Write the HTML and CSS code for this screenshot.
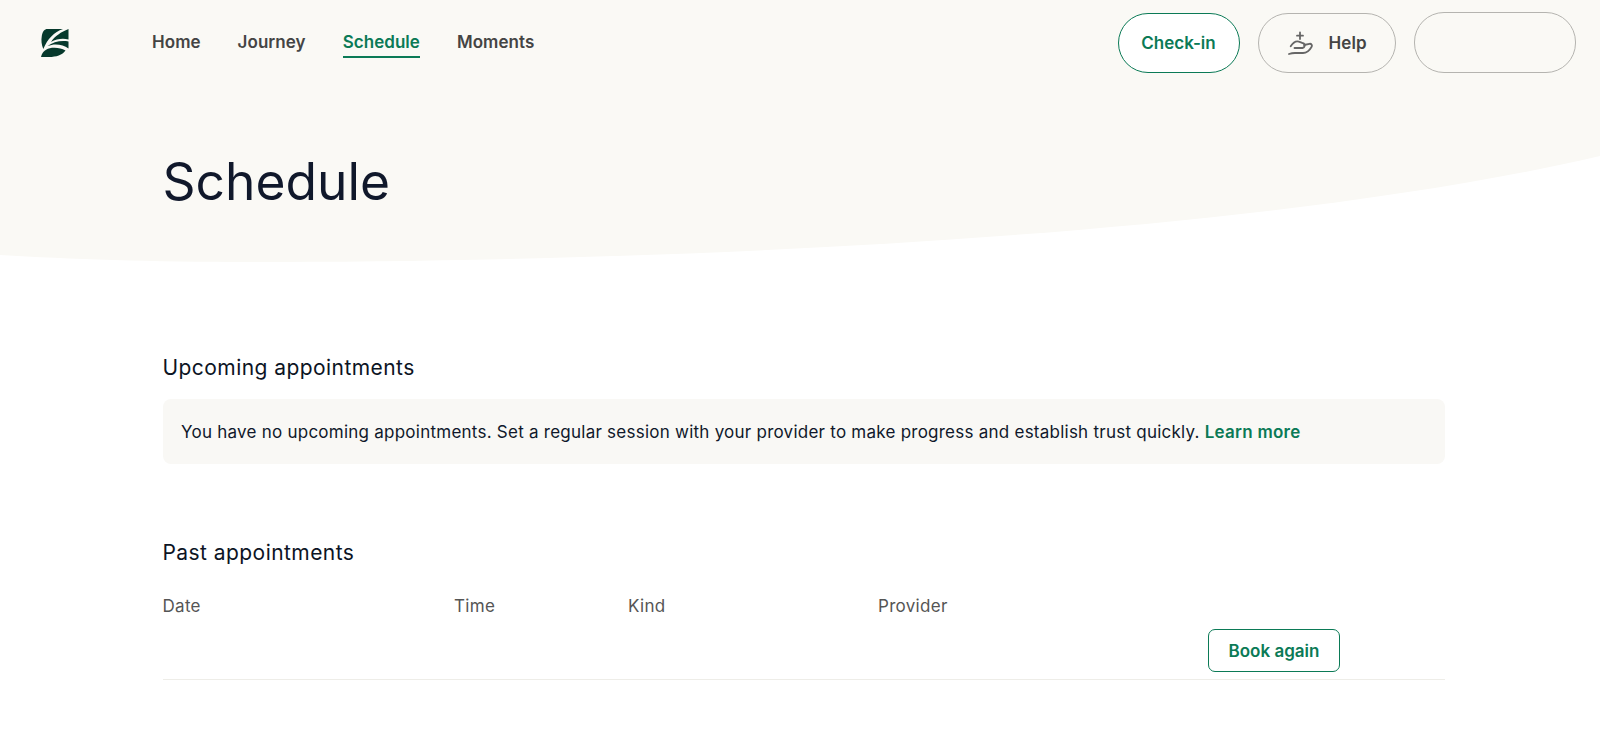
FILE: index.html
```html
<!DOCTYPE html>
<html lang="en">
<head>
<meta charset="utf-8">
<title>Schedule</title>
<link rel="stylesheet" href="styles.css">
</head>
<body>
<svg class="hero-bg" viewBox="0 0 1600 270" preserveAspectRatio="none" aria-hidden="true">
  <path d="M0 0H1600V156C1240 240 640 262 250 262C150 262 70 259 0 255Z"/>
</svg>
<header class="topbar">
  <a class="logo" href="#" aria-label="Home">
    <svg viewBox="0 0 28 28" width="28" height="28" fill="#06392c">
      <path d="M6.500 0H22C13 3 6.500 10 2.300 20C0.500 16 0 11 0.800 7C1.500 2.500 3.500 0 6.500 0Z"/>
      <path d="M27.500 0V10.500C21.500 9 15.500 10 10 13C14 7 20 3 27.500 0Z"/>
      <path d="M27.500 12.500V19.500C22 15.500 14 14 6.500 17C12 13 20 11 27.500 12.500Z"/>
      <path d="M0 28C1 23 5 19.500 11 18.800C16 18.300 20.500 19.300 24.500 21.500C21.500 26 15 28 8 28Z"/>
    </svg>
  </a>
  <nav class="nav">
    <a class="nav-link" href="#">Home</a>
    <a class="nav-link" href="#">Journey</a>
    <a class="nav-link active" href="#">Schedule</a>
    <a class="nav-link" href="#">Moments</a>
  </nav>
  <div class="actions">
    <a class="pill pill-green" href="#">Check-in</a>
    <a class="pill pill-help" href="#">
      <svg viewBox="0 0 25 25" width="25" height="25" fill="none" stroke="#666" stroke-width="1.800" stroke-linecap="round" stroke-linejoin="round">
        <path d="M12 1.500v6.500M9 4.700h6"/>
        <path d="M2.700 15.300C4.500 12.500 7 10.300 9.300 10.300C11.500 10.300 13.500 12 16 12.500C17.500 13 17 16.500 14.500 17H6.500"/>
        <path d="M16 14L21.500 12.800C23.500 12.500 24.500 14.500 23.500 16C21.500 19.500 18.500 22 15 22H7C5 22 3 22.300 1 23"/>
      </svg>
      <span>Help</span>
    </a>
    <a class="pill pill-empty" href="#" aria-label="Account"></a>
  </div>
</header>
<main class="page">
  <h1 class="title">Schedule</h1>
  <section class="upcoming">
    <h2 class="section-title">Upcoming appointments</h2>
    <p class="notice">You have no upcoming appointments. Set a regular session with your provider to make progress and establish trust quickly. <a class="learn" href="#">Learn more</a></p>
  </section>
  <section class="past">
    <h2 class="section-title">Past appointments</h2>
    <div class="table-head">
      <span>Date</span><span>Time</span><span>Kind</span><span>Provider</span>
    </div>
    <div class="table-row">
      <a class="book" href="#">Book again</a>
    </div>
  </section>
</main>
</body>
</html>
```
FILE: styles.css
```css
* { box-sizing: border-box; }
html, body { margin: 0; height: 100%; }
body {
  position: relative;
  background: #fff;
  color: #10182b;
  font-family: "Inter", "Liberation Sans", sans-serif;
  overflow: hidden;
}
a { text-decoration: none; color: inherit; }
.hero-bg {
  position: absolute;
  top: 0;
  left: 0;
  width: 1600px;
  height: 270px;
  z-index: -1;
  fill: #faf9f5;
}
.topbar {
  display: flex;
  align-items: flex-start;
  padding: 12px 24.500px 0 41px;
  height: 72px;
}
.logo { display: block; width: 28px; height: 28px; margin-top: 17px; }
.nav { display: flex; gap: 37px; margin-left: 83px; margin-top: 18px; }
.nav-link {
  font-size: 17px;
  font-weight: 600;
  line-height: 24px;
  letter-spacing: 0.05px;
  color: #444;
  padding-bottom: 2px;
  border-bottom: 2px solid transparent;
  height: 28px;
}
.nav-link.active { color: #0b7a56; border-bottom-color: #0b7a56; }
.actions { display: flex; gap: 18px; margin-left: auto; align-items: flex-start; }
.pill {
  display: flex;
  align-items: center;
  justify-content: center;
  height: 60px;
  margin-top: 1px;
  border-radius: 30px;
  font-size: 17px;
  font-weight: 600;
  color: #444;
  border: 1.500px solid #b5b4b0;
}
.pill-green { width: 122px; color: #0b7a56; border-color: #0b7a56; background: #fff; }
.pill-help { width: 138px; gap: 16px; justify-content: flex-start; padding-left: 29px; letter-spacing: 0.1px; }
.pill-empty { width: 162px; height: 61px; margin-top: 0; }
.page { padding: 0 155px 0 162.500px; }
.title {
  margin: 0;
  padding-top: 71px;
  font-size: 51.500px;
  font-weight: 400;
  line-height: 76px;
  color: #10182b;
}
.upcoming { margin-top: 134px; }
.section-title {
  margin: 0;
  font-size: 21px;
  font-weight: 400;
  line-height: 30px;
  letter-spacing: 0.44px;
  color: #0c1424;
}
.notice {
  margin: 16px 0 0;
  height: 65px;
  padding: 0 18.500px;
  line-height: 66px;
  font-size: 17px;
  letter-spacing: 0.243px;
  background: #f9f8f5;
  border-radius: 8px;
  color: #10182b;
}
.learn { color: #0b7a56; font-weight: 600; }
.past { margin-top: 74px; }
.table-head {
  display: grid;
  grid-template-columns: 291.500px 174px 250px 1fr;
  margin-top: 26px;
  font-size: 17px;
  line-height: 24px;
  letter-spacing: 0.3px;
  color: #555;
}
.table-row {
  display: flex;
  height: 62px;
  padding: 11px 0 0 1045.500px;
  border-bottom: 1px solid #eeede8;
}
.book {
  display: flex;
  align-items: center;
  justify-content: center;
  width: 132px;
  height: 43px;
  border: 1.500px solid #0b7a56;
  border-radius: 7px;
  font-size: 17px;
  font-weight: 600;
  color: #0b7a56;
}
```
